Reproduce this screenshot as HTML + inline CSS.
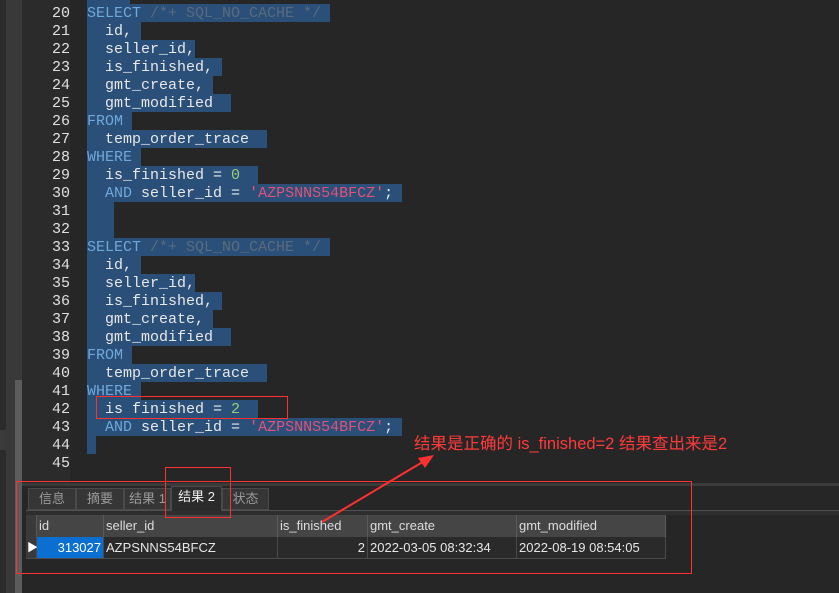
<!DOCTYPE html>
<html><head><meta charset="utf-8"><style>
*{margin:0;padding:0;box-sizing:border-box}
body{width:839px;height:593px;background:#262626;position:relative;overflow:hidden;font-family:"Liberation Sans","Noto Sans CJK SC",sans-serif}
.a{position:absolute}
.code{font-family:"Liberation Mono",monospace;font-size:15px;line-height:18px;color:#e8e8e8;white-space:pre}
.ln{position:absolute;left:22px;width:48px;text-align:right;color:#e0e0e0;font-family:"Liberation Mono",monospace;font-size:15px;line-height:18px}
.sel{position:absolute;background:#2a4f78;height:18px}
.k{color:#6fa8dc}.c{color:#5a6b7d}.s{color:#e0527a}.n{color:#9ccc7a}
.tab{position:absolute;top:488px;height:22px;background:#363636;border:1px solid #4a4a4a;color:#9a9a9a;font-size:13px;line-height:20px;text-align:center}
.th{position:absolute;top:515px;height:22px;background:#454545;border-right:1px solid #5a5a5a;color:#ddd;font-size:13px;line-height:22px;padding-left:2px}
.td{position:absolute;top:537px;height:22px;background:#2a2a2a;border-right:1px solid #4a4a4a;border-bottom:1px solid #4a4a4a;color:#e6e6e6;font-size:13px;line-height:22px;padding:0 2px}
.r{position:absolute;border:1px solid #ff3030;z-index:10}
</style></head><body>
<div class="a" style="left:0;top:0;width:6px;height:593px;background:#2b2b2b"></div>
<div class="a" style="left:0;top:430px;width:6px;height:20px;background:#3a3a3a"></div>
<div class="a" style="left:6px;top:0;width:16px;height:593px;background:#393939"></div>
<div class="a" style="left:15px;top:380px;width:7px;height:213px;background:#5c5c5c"></div>
<div class="a" style="left:22px;top:0;width:48px;height:483px;background:#2b2b2b"></div>
<div class="a" style="left:70px;top:0;width:769px;height:483px;background:#262626"></div>

<div class="sel" style="left:87px;top:0;width:43px;height:4px"></div>
<div class="sel" style="left:87px;top:4px;width:243px"></div>
<div class="sel" style="left:87px;top:22px;width:54px"></div>
<div class="sel" style="left:87px;top:40px;width:108px"></div>
<div class="sel" style="left:87px;top:58px;width:135px"></div>
<div class="sel" style="left:87px;top:76px;width:126px"></div>
<div class="sel" style="left:87px;top:94px;width:144px"></div>
<div class="sel" style="left:87px;top:112px;width:45px"></div>
<div class="sel" style="left:87px;top:130px;width:180px"></div>
<div class="sel" style="left:87px;top:148px;width:54px"></div>
<div class="sel" style="left:87px;top:166px;width:171px"></div>
<div class="sel" style="left:87px;top:184px;width:315px"></div>
<div class="sel" style="left:87px;top:202px;width:27px"></div>
<div class="sel" style="left:87px;top:220px;width:27px"></div>
<div class="sel" style="left:87px;top:238px;width:243px"></div>
<div class="sel" style="left:87px;top:256px;width:54px"></div>
<div class="sel" style="left:87px;top:274px;width:108px"></div>
<div class="sel" style="left:87px;top:292px;width:135px"></div>
<div class="sel" style="left:87px;top:310px;width:126px"></div>
<div class="sel" style="left:87px;top:328px;width:144px"></div>
<div class="sel" style="left:87px;top:346px;width:45px"></div>
<div class="sel" style="left:87px;top:364px;width:180px"></div>
<div class="sel" style="left:87px;top:382px;width:54px"></div>
<div class="sel" style="left:87px;top:400px;width:171px"></div>
<div class="sel" style="left:87px;top:418px;width:315px"></div>
<div class="sel" style="left:87px;top:436px;width:9px"></div>

<div class="ln" style="top:5px">20<br>21<br>22<br>23<br>24<br>25<br>26<br>27<br>28<br>29<br>30<br>31<br>32<br>33<br>34<br>35<br>36<br>37<br>38<br>39<br>40<br>41<br>42<br>43<br>44<br>45</div>
<div class="a code" style="left:87px;top:5px"><span class="k">SELECT</span> <span class="c">/*+ SQL_NO_CACHE */</span>
  id,
  seller_id,
  is_finished,
  gmt_create,
  gmt_modified
<span class="k">FROM</span>
  temp_order_trace
<span class="k">WHERE</span>
  is_finished = <span class="n">0</span>
  <span class="k">AND</span> seller_id = <span class="s">'AZPSNNS54BFCZ'</span>;


<span class="k">SELECT</span> <span class="c">/*+ SQL_NO_CACHE */</span>
  id,
  seller_id,
  is_finished,
  gmt_create,
  gmt_modified
<span class="k">FROM</span>
  temp_order_trace
<span class="k">WHERE</span>
  is finished = <span class="n">2</span>
  <span class="k">AND</span> seller_id = <span class="s">'AZPSNNS54BFCZ'</span>;
</div>

<div class="a" style="left:22px;top:483px;width:817px;height:3px;background:#3a3a3a"></div>
<div class="a" style="left:26px;top:510px;width:813px;height:1px;background:#505050"></div>
<div class="a" style="left:26px;top:511px;width:813px;height:4px;background:#2e2e2e"></div>
<div class="tab" style="left:28px;width:48px">信息</div>
<div class="tab" style="left:76px;width:48px">摘要</div>
<div class="tab" style="left:124px;width:47px">结果 1</div>
<div class="tab" style="left:171px;top:486px;height:25px;width:51px;background:#2b2b2b;color:#eee;border-bottom:none">结果 2</div>
<div class="tab" style="left:222px;width:47px">状态</div>

<div class="th" style="left:26px;width:11px;background:#3a3a3a"></div>
<div class="th" style="left:37px;width:67px">id</div>
<div class="th" style="left:104px;width:174px">seller_id</div>
<div class="th" style="left:278px;width:90px">is_finished</div>
<div class="th" style="left:368px;width:149px">gmt_create</div>
<div class="th" style="left:517px;width:149px">gmt_modified</div>
<div class="td" style="left:26px;width:11px;background:#3a3a3a;color:#fff;font-size:11px;padding:0 1px">▶</div>
<div class="td" style="left:37px;width:67px;background:#0a6fd0;text-align:right;color:#fff">313027</div>
<div class="td" style="left:104px;width:174px">AZPSNNS54BFCZ</div>
<div class="td" style="left:278px;width:90px;text-align:right">2</div>
<div class="td" style="left:368px;width:149px">2022-03-05 08:32:34</div>
<div class="td" style="left:517px;width:149px">2022-08-19 08:54:05</div>

<div class="r" style="left:96px;top:396px;width:192px;height:23px"></div>
<div class="r" style="left:165px;top:467px;width:66px;height:51px"></div>
<div class="r" style="left:16px;top:481px;width:676px;height:93px"></div>
<svg class="a" style="left:0;top:0;z-index:10" width="839" height="593"><line x1="322" y1="522" x2="426" y2="460" stroke="#ff3030" stroke-width="2"/><polygon points="434,455 418,458 425,468" fill="#ff3030"/></svg>
<div class="a" style="left:414px;top:430px;color:#ff3a3a;font-size:16.5px;white-space:nowrap;z-index:10">结果是正确的 is_finished=2 结果查出来是2</div>
</body></html>
